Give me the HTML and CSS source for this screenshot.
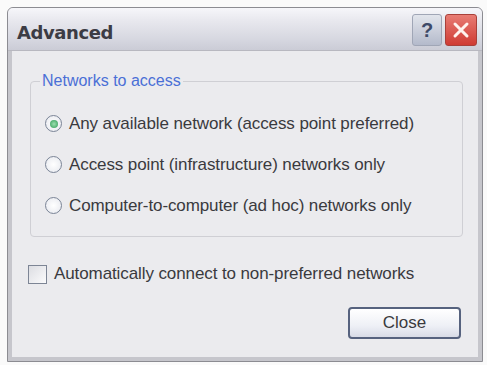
FILE: index.html
```html
<!DOCTYPE html>
<html>
<head>
<meta charset="utf-8">
<link rel="stylesheet" href="styles.css">
</head>
<body>
<div class="window">
  <div class="titlebar">
    <span class="title">Advanced</span>
    <div class="tbtns">
      <div class="tbtn help">?</div>
      <div class="tbtn close">
        <svg width="18" height="18" viewBox="0 0 18 18"><path d="M3 3 L15 15 M15 3 L3 15" stroke="#fff3ee" stroke-width="3" stroke-linecap="round"/></svg>
      </div>
    </div>
  </div>
  <div class="body">
    <fieldset class="group">
      <legend class="legend">Networks to access</legend>
      <div class="opt"><span class="radio checked"><span class="dot"></span></span>Any available network (access point preferred)</div>
      <div class="opt"><span class="radio"></span>Access point (infrastructure) networks only</div>
      <div class="opt"><span class="radio"></span>Computer-to-computer (ad hoc) networks only</div>
    </fieldset>
    <div class="check-row"><span class="checkbox"></span>Automatically connect to non-preferred networks</div>
    <div class="actions"><div class="button">Close</div></div>
  </div>
</div>
</body>
</html>
```
FILE: styles.css
```css
html, body { margin: 0; padding: 0; background: #fafafa; }
body {
  font-family: "Liberation Sans", Arial, sans-serif;
  font-size: 17px;
  color: #3a3a3e;
  padding: 7px 0 0 7px;
}
.window {
  width: 476px;
  height: 355px;
  box-sizing: border-box;
  border: 1px solid #8c8c92;
  border-radius: 6px 6px 0 0;
  background: #c6c6cc;
  display: flex;
  flex-direction: column;
  padding: 0 4px 4px 4px;
}
.titlebar {
  height: 42px;
  margin: 0 -4px;
  border-radius: 5px 5px 0 0;
  background: linear-gradient(#f6f6fa 0%, #e8e8ee 30%, #d6d7e0 75%, #cbccd6 100%);
  display: flex;
  align-items: center;
  justify-content: space-between;
  padding: 0 5px 0 9px;
  border-bottom: 1px solid #b8b8c0;
}
.title {
  font-family: "DejaVu Sans", sans-serif;
  font-weight: bold;
  font-size: 18px;
  color: #3c3c44;
  letter-spacing: -0.4px;
  margin-top: 6px;
}
.tbtns { display: flex; gap: 3px; margin-top: 2px; }
.tbtn {
  width: 30px;
  height: 32px;
  box-sizing: border-box;
  border-radius: 3px;
  display: flex;
  align-items: center;
  justify-content: center;
}
.help {
  background: linear-gradient(#e2e5ec, #b4bacb);
  border: 1px solid #a0a6b6;
  color: #3e4a68;
  font-size: 20px;
  font-weight: bold;
  font-family: "Liberation Sans", sans-serif;
}
.close {
  width: 32px;
  background: linear-gradient(#e87c74, #cf3b33);
  border: 1px solid #a8403a;
}
.body {
  flex: 1;
  background: #ebebee;
  padding: 21px 15px 0 17px;
  display: flex;
  flex-direction: column;
}
.group {
  margin: 0 0 0 1px;
  border: 1px solid #cfcfd4;
  border-radius: 4px;
  padding: 13px 0 10px 14px;
  display: flex;
  flex-direction: column;
}
.legend {
  color: #4a6fd6;
  padding: 0 2px;
  margin-left: -5px;
  font-size: 16px;
}
.opt {
  height: 41px;
  display: flex;
  align-items: center;
  letter-spacing: -0.1px;
}
.radio {
  width: 15px;
  height: 15px;
  border-radius: 50%;
  border: 1px solid #7a8496;
  background: radial-gradient(#ffffff, #e6e8ee);
  margin-right: 7px;
  display: flex;
  align-items: center;
  justify-content: center;
  flex: none;
}
.dot {
  width: 8px;
  height: 8px;
  border-radius: 50%;
  background: radial-gradient(#9de0b0, #2f9a55);
}
.check-row {
  display: flex;
  align-items: center;
  margin-top: 27px;
  margin-left: -1px;
  letter-spacing: -0.1px;
}
.checkbox {
  width: 17px;
  height: 17px;
  border: 1px solid #7d8595;
  background: linear-gradient(135deg, #dcdde2, #fbfbfc);
  margin-right: 7px;
  flex: none;
}
.actions {
  display: flex;
  justify-content: flex-end;
  margin-top: 23px;
  padding-right: 2px;
}
.button {
  width: 113px;
  height: 32px;
  box-sizing: border-box;
  border: 2px solid #56627e;
  border-radius: 4px;
  background: linear-gradient(#ffffff, #eef0f6 60%, #d8dbe6);
  display: flex;
  align-items: center;
  justify-content: center;
  color: #3a3a3e;
}
```
